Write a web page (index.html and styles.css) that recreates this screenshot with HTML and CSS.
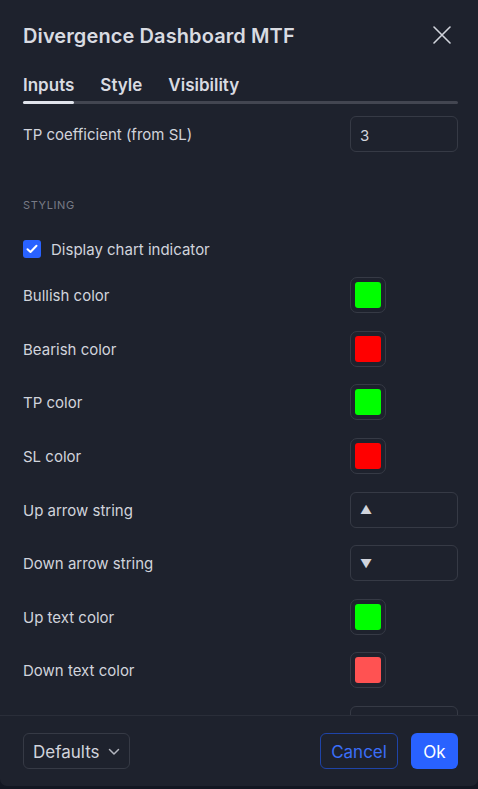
FILE: index.html
```html
<!DOCTYPE html>
<html>
<head>
<meta charset="utf-8">
<link rel="stylesheet" href="styles.css">
</head>
<body>
<div class="dialog">
  <div class="header">
    <div class="title">Divergence Dashboard MTF</div>
    <svg class="close" width="18" height="18" viewBox="0 0 18 18"><path d="M1 1L17 17M17 1L1 17" stroke="#d1d4dc" stroke-width="1.6" fill="none" stroke-linecap="round"/></svg>
  </div>
  <div class="tabs">
    <div class="tab active">Inputs</div>
    <div class="tab">Style</div>
    <div class="tab">Visibility</div>
  </div>
  <div class="track"><div class="track-active"></div></div>
  <div class="content">
    <div class="row first">
      <div class="label">TP coefficient (from SL)</div>
      <div class="input">3</div>
    </div>
    <div class="section">STYLING</div>
    <div class="row check-row">
      <div class="checkbox"><svg width="12" height="10" viewBox="0 0 12 10"><path d="M1.5 5.2L4.5 8L10.5 1.8" stroke="#fff" stroke-width="2" fill="none" stroke-linecap="round" stroke-linejoin="round"/></svg></div>
      <div class="label">Display chart indicator</div>
    </div>
    <div class="rows">
      <div class="row"><div class="label">Bullish color</div><div class="swatch"><div class="fill green"></div></div></div>
      <div class="row"><div class="label">Bearish color</div><div class="swatch"><div class="fill red"></div></div></div>
      <div class="row"><div class="label">TP color</div><div class="swatch"><div class="fill green"></div></div></div>
      <div class="row"><div class="label">SL color</div><div class="swatch"><div class="fill red"></div></div></div>
      <div class="row"><div class="label">Up arrow string</div><div class="input arrow">▲</div></div>
      <div class="row"><div class="label">Down arrow string</div><div class="input arrow">▼</div></div>
      <div class="row"><div class="label">Up text color</div><div class="swatch"><div class="fill green"></div></div></div>
      <div class="row"><div class="label">Down text color</div><div class="swatch"><div class="fill salmon"></div></div></div>
      <div class="row"><div class="label"></div><div class="input"></div></div>
    </div>
  </div>
  <div class="footer">
    <div class="btn defaults">Defaults <svg width="12" height="8" viewBox="0 0 12 8"><path d="M1.5 1.5L6 6L10.5 1.5" stroke="#b2b5be" stroke-width="1.5" fill="none" stroke-linecap="round" stroke-linejoin="round"/></svg></div>
    <div class="actions">
      <div class="btn cancel">Cancel</div>
      <div class="btn ok">Ok</div>
    </div>
  </div>
</div>
</body>
</html>
```

FILE: styles.css
```css
* { box-sizing: border-box; }
html, body { margin: 0; padding: 0; }
body {
  background: #131722;
  width: 478px;
  height: 789px;
  overflow: hidden;
  font-family: Inter, "Noto Sans", sans-serif;
  color: #d1d4dc;
}
.dialog {
  height: 786px;
  background: #1e222d;
  border-radius: 0 0 7px 7px;
  display: flex;
  flex-direction: column;
  overflow: hidden;
}
.header {
  display: flex;
  justify-content: space-between;
  align-items: center;
  padding: 23px 27px 0 23px;
  height: 47px;
}
.title {
  font-size: 20px;
  font-weight: 600;
  line-height: 24px;
  color: #d9dbe1;
  letter-spacing: 0.1px;
  padding-top: 1px;
}
.close { display: block; margin-top: -1px; }
.tabs {
  display: flex;
  gap: 26px;
  padding: 26px 23px 0 23px;
}
.tab {
  font-size: 17px;
  font-weight: 600;
  line-height: 22px;
  color: #d9dbe1;
  padding-top: 1px;
}
.track {
  margin: 5px 20px 0 23px;
  height: 3px;
  background: #434651;
  border-radius: 2px;
}
.track-active {
  width: 51px;
  height: 3px;
  background: #e0e3eb;
  border-radius: 2px;
}
.content {
  flex: 1;
  overflow: hidden;
  padding: 12px 20px 0 23px;
}
.row {
  display: flex;
  justify-content: space-between;
  align-items: center;
  height: 36px;
}
.label {
  font-size: 15px;
  line-height: 20px;
  color: #d1d4dc;
  padding-top: 2px;
}
.input {
  width: 108px;
  height: 36px;
  border: 1px solid #363a45;
  border-radius: 6px;
  padding: 2px 9px 0 9px;
  display: flex;
  align-items: center;
  font-size: 15px;
  color: #d1d4dc;
}
.input.arrow { font-size: 12px; padding-top: 0; }
.section {
  margin-top: 45px;
  font-size: 11px;
  line-height: 16px;
  letter-spacing: 0.6px;
  color: #787b86;
}
.check-row {
  margin-top: 18px;
  justify-content: flex-start;
  gap: 10px;
}
.checkbox {
  width: 18px;
  height: 18px;
  border-radius: 3px;
  background: #2962ff;
  display: flex;
  align-items: center;
  justify-content: center;
}
.rows {
  margin-top: 10px;
  display: flex;
  flex-direction: column;
  gap: 17.625px;
}
.swatch {
  width: 36px;
  height: 36px;
  border: 1px solid #363a45;
  border-radius: 7px;
  padding: 4px;
  margin-right: 72px;
}
.fill {
  width: 26px;
  height: 26px;
  border-radius: 3px;
}
.green { background: #00ff00; }
.red { background: #ff0000; }
.salmon { background: #ff5252; }
.footer {
  border-top: 1px solid #2a2e39;
  padding: 17px 20px 17px 23px;
  display: flex;
  justify-content: space-between;
  align-items: center;
}
.btn {
  height: 36px;
  border-radius: 6px;
  font-size: 17px;
  display: flex;
  align-items: center;
  padding-top: 1px;
}
.defaults {
  width: 107px;
  border: 1px solid #363a45;
  padding: 1px 9px 0 9px;
  justify-content: space-between;
  color: #d1d4dc;
}
.actions { display: flex; gap: 13px; }
.cancel {
  width: 78px;
  justify-content: center;
  border: 1px solid #1f44a8;
  color: #3b6ef8;
}
.ok {
  width: 47px;
  justify-content: center;
  background: #2962ff;
  color: #ffffff;
}
```
